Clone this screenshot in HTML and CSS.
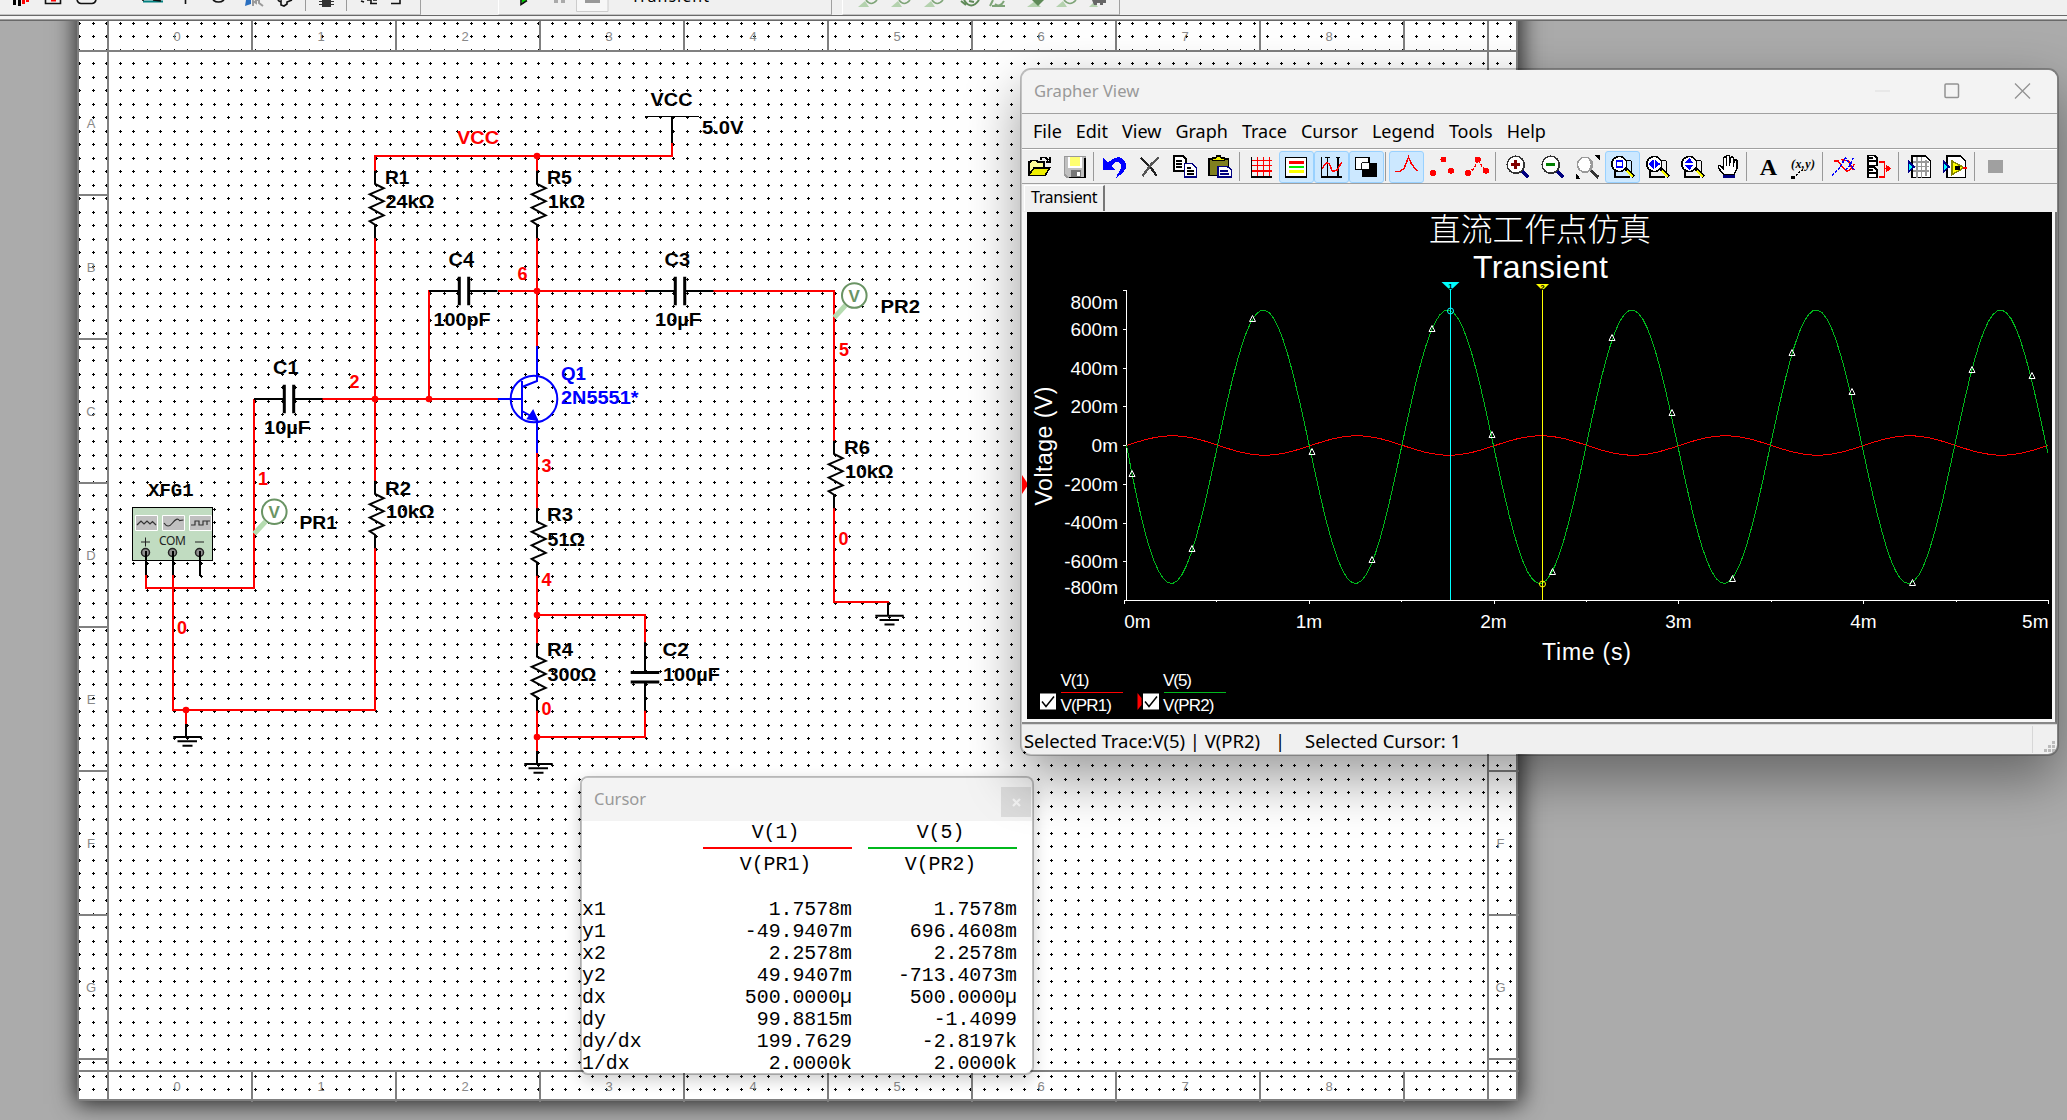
FILE: index.html
```html
<!DOCTYPE html>
<html lang="en">
<head>
<meta charset="utf-8">
<title>Circuit design</title>
<link rel="stylesheet" href="styles.css">
</head>
<body>
<header class="bands">
  <div class="band band-edit">
    <svg width="420" height="15" viewBox="0 0 420 15">
      <path d="M13 0h3v5h-3zM18 0h3v6h-3z" fill="#000"/><path d="M22 0h3v4h-3zM26 0h3v2h-3z" fill="#f00"/>
      <path d="M45.500 0V3.500H60.500V0" class="k"/><path d="M51 0h5v1.500h-5z" fill="#f00"/>
      <path d="M77 0Q78 3.500 81 3.500H92Q95 3.500 96 0" class="k"/>
      <path d="M143 1.500H163" stroke="#008080" stroke-width="2"/><path d="M143 0V1M153 0l8 1" class="k"/>
      <path d="M185.500 0V4" class="k"/><path d="M213 0q5.500 4 11 0" class="k"/>
      <path d="M245 6l1-6h5v4z" fill="#2a6fc0"/><path d="M253 6V1l3 2V0h3v3l4 3" stroke="#9a9a9a" stroke-width="2" fill="none"/>
      <path d="M278 0q1 2 3 1v4l3 1 3-2V2l5-2" class="k"/>
      <path d="M305.500 0V11M346.500 0V11" stroke="#999"/>
      <path d="M322 0h9v7h-9z" fill="#333"/><path d="M319 1.500h15M319 4.500h15" stroke="#333"/>
      <path d="M361 1l3 1M367 0h4v4M370 3.500h7M373 0h4" class="k"/><path d="M391 3.500h9V0" class="k"/>
    </svg>
  </div>
  <div class="band band-run">
    <svg width="333" height="15" viewBox="498 0 333 15">
      <path d="M520 0h6l-4 4z" fill="#00d000"/><path d="M520 0V4.500l6-4" class="k"/>
      <path d="M553 0h4v3h-4zM560 0h4v3h-4z" fill="#aaa"/>
      <path d="M575.500 0V11.500H607V0" fill="#f7f7f7" stroke="#ccc"/><path d="M584 0h15v3h-15z" fill="#999"/>
      <text x="630" y="2" class="analysis" textLength="78">Transient</text>
    </svg>
  </div>
  <div class="band band-probe">
    <svg width="277" height="15" viewBox="842 0 277 15">
      <g id="probes" fill="none">
        <path d="M857 7l7-6 4 6z" fill="#b4d2ae"/><path d="M865 0q5 7 11 0" stroke="#7ea477" stroke-width="1.600"/>
        <path d="M890 7l7-6 4 6z" fill="#b4d2ae"/><path d="M898 0q5 7 11 0" stroke="#7ea477" stroke-width="1.600"/>
        <path d="M923 7l7-6 4 6z" fill="#b4d2ae"/><path d="M931 0q5 7 11 0" stroke="#7ea477" stroke-width="1.600"/>
        <path d="M960 1l5 4M963 0q7 11 15 0M968 1l5 1" stroke="#5f8a58" stroke-width="2"/>
        <path d="M989 6l3-6M994 4q5 4 9-3M991 6h13" stroke="#7ea477" stroke-width="2"/>
        <path d="M1026 7l8-6 6 6z" fill="#b4d2ae"/><path d="M1031 0h12l-6 6z" fill="#5f8a58"/>
        <path d="M1055 7l7-6 4 6z" fill="#b4d2ae"/><path d="M1063 0q6 7 12 0" stroke="#7ea477" stroke-width="1.600"/>
        <path d="M1088 7l5-5 4 5z" fill="#b4d2ae"/><path d="M1091 0h14v3h-3v2h-3V3h-3v2h-3z" fill="#666"/>
      </g>
    </svg>
  </div>
</header>

<main class="workspace">
  <div class="sheet"></div>
  <svg class="schematic" width="2067" height="1099" viewBox="0 21 2067 1099">
    <defs>
      <pattern id="dots" patternUnits="userSpaceOnUse" x="79" y="8" width="27" height="27">
        <path d="M0 1h1v1h-1zM13 1h3v1h-3zM14 0h1v3h-1zM26 1h1v1h-1zM0 0h1v3h-1zM1 1h1v1h-1zM0 15h2v1h-2zM26 15h1v1h-1zM0 14h1v3h-1zM13 15h3v1h-3zM14 14h1v3h-1z"/>
      </pattern>
      <path id="res" d="M0 0V13.300L8.700 17.600L-5.300 23.600L8.700 30.600L-5.300 37L8.700 44.600L-5.300 50.600L0 54V67.500"/>
      <g id="cap"><path d="M0 0H30.300M39.700 0H68.500"/><path d="M30.300 -14.300V14.300M39.700 -14.300V14.300" stroke-width="3"/></g>
      <g id="gnd"><path d="M0 -13V0M-12.700 0H15.700M-8.500 4.300H11M-3.500 8.700H6.500"/></g>
      <g id="probe"><path d="M-20 22L-9 10" stroke="#b5dcb0" stroke-width="5"/><circle r="12.300" fill="#fff" stroke="#6a9464" stroke-width="2"/><text x="-5.700" y="6" class="probe-v">V</text></g>
    </defs>
    <rect x="79" y="21" width="1437" height="1078" fill="url(#dots)" shape-rendering="crispEdges"/>
    <g class="frame">
      <path d="M79 51H1516M79 1071H1519M108 21V1101M1488 21V1101"/>
      <path d="M252 21V51M396 21V51M540 21V51M684 21V51M828 21V51M972 21V51M1116 21V51M1260 21V51M1404 21V51"/>
      <path d="M252 1071V1102M396 1071V1102M540 1071V1102M684 1071V1102M828 1071V1102M972 1071V1102M1116 1071V1102M1260 1071V1102M1404 1071V1102"/>
      <path d="M79 195H108M79 339H108M79 483H108M79 627H108M79 771H108M79 915H108M79 1059H108"/>
      <path d="M1488 771H1519M1488 915H1519M1488 1059H1519"/>
    </g>
    <g class="zones">
      <text x="177" y="41">0</text><text x="321" y="41">1</text><text x="465" y="41">2</text><text x="609" y="41">3</text><text x="753" y="41">4</text><text x="897" y="41">5</text><text x="1041" y="41">6</text><text x="1185" y="41">7</text><text x="1329" y="41">8</text>
      <text x="177" y="1091">0</text><text x="321" y="1091">1</text><text x="465" y="1091">2</text><text x="609" y="1091">3</text><text x="753" y="1091">4</text><text x="897" y="1091">5</text><text x="1041" y="1091">6</text><text x="1185" y="1091">7</text><text x="1329" y="1091">8</text>
      <text x="91" y="128">A</text><text x="91" y="272">B</text><text x="91" y="416">C</text><text x="91" y="560">D</text><text x="91" y="704">E</text><text x="91" y="848">F</text><text x="91" y="992">G</text>
      <text x="1500.500" y="848">F</text><text x="1500.500" y="992">G</text>
    </g>
    <g class="wire">
      <path d="M375 171V156H672V143M537 156V171M375 237V481M375 548V710H173V575M321 399H498M429 399V290M498 291H645M537 237V346M713 291H834V441M834 508V602H889M254 399V588H146V575M537 453V509M537 575V644M537 615H645V644M537 710V751M537 737H645V710M186 710V724"/>
    </g>
    <g class="part">
      <path d="M672 143V116"/><path d="M645 116.500H699" stroke-width="1.200"/>
      <use href="#res" x="375" y="170.700"/><use href="#res" x="537" y="170.700"/><use href="#res" x="375" y="480.700"/><use href="#res" x="537" y="508.300"/><use href="#res" x="537" y="643.300"/><use href="#res" x="834" y="440.700"/>
      <use href="#cap" x="254" y="399"/><use href="#cap" x="429" y="291"/><use href="#cap" x="645" y="291"/>
      <g transform="translate(645 642.300) rotate(90)"><use href="#cap"/></g>
      <use href="#gnd" x="186" y="737"/><use href="#gnd" x="537" y="764"/><use href="#gnd" x="888" y="615.700"/>
    </g>
    <g class="node"><circle cx="537" cy="156" r="3.300"/><circle cx="537" cy="291" r="3.300"/><circle cx="375" cy="399" r="3.300"/><circle cx="429" cy="399" r="3.300"/><circle cx="537" cy="615" r="3.300"/><circle cx="537" cy="737" r="3.300"/><circle cx="186" cy="710" r="3.300"/></g>
    <g class="bjt">
      <circle cx="534" cy="399" r="23.300"/><path d="M498 399H522M522 381V419.500M537 346V381L522 387M522 411L537 419.500V453"/><path d="M528 418.500L537 420L533 411z" fill="#00f"/>
    </g>
    <g class="gen">
      <rect x="132.500" y="507.500" width="80" height="53" fill="#c1dcc1" stroke="#000"/>
      <g fill="#c0c0c0" stroke="#fff"><path d="M135.500 515.500h22v15h-22zM162.500 515.500h22v15h-22zM189.500 515.500h22v15h-22z"/></g>
      <path d="M137 525l4-4 3 3 3-3 3 3 2.500-2.500 3.500 3.500M164 523q4 6 8.500 0t7-2.500l4-.5M191 525h4v-4h4v4h4v-4h4v4M207 521h3" fill="none" stroke="#333" stroke-width="1.200"/>
      <path d="M141 542h9M145.500 537.500v9M195 542h9" stroke="#222"/>
      <text x="159" y="545" class="com" textLength="27">COM</text>
      <g fill="#909090" stroke="#222" stroke-width="1.500"><circle cx="145.500" cy="552.500" r="4"/><circle cx="172.500" cy="552.500" r="4"/><circle cx="199.500" cy="552.500" r="4"/></g>
      <path d="M146 551V575M173 551V575M200 551V576" stroke="#000" stroke-width="2"/>
    </g>
    <use href="#probe" x="274.300" y="511.700"/><use href="#probe" x="854.300" y="295.500"/>
    <g class="label">
      <text x="650.500" y="105.500" textLength="42" lengthAdjust="spacingAndGlyphs">VCC</text>
      <text x="702" y="134" textLength="41.500" lengthAdjust="spacingAndGlyphs">5.0V</text>
      <text x="385" y="183.500" textLength="24.500" lengthAdjust="spacingAndGlyphs">R1</text><text x="385.500" y="208" textLength="49" lengthAdjust="spacingAndGlyphs">24kΩ</text>
      <text x="547" y="183.500" textLength="25" lengthAdjust="spacingAndGlyphs">R5</text><text x="548" y="208" textLength="37" lengthAdjust="spacingAndGlyphs">1kΩ</text>
      <text x="448.500" y="266" textLength="25.500" lengthAdjust="spacingAndGlyphs">C4</text><text x="433.500" y="326" textLength="57" lengthAdjust="spacingAndGlyphs">100pF</text>
      <text x="664.500" y="266" textLength="25.500" lengthAdjust="spacingAndGlyphs">C3</text><text x="655" y="326" textLength="46" lengthAdjust="spacingAndGlyphs">10µF</text>
      <text x="273" y="374" textLength="25.500" lengthAdjust="spacingAndGlyphs">C1</text><text x="264" y="434" textLength="46" lengthAdjust="spacingAndGlyphs">10µF</text>
      <text x="385" y="494.500" textLength="26" lengthAdjust="spacingAndGlyphs">R2</text><text x="386" y="518" textLength="48.500" lengthAdjust="spacingAndGlyphs">10kΩ</text>
      <text x="547" y="521" textLength="26" lengthAdjust="spacingAndGlyphs">R3</text><text x="547.500" y="545.500" textLength="37.500" lengthAdjust="spacingAndGlyphs">51Ω</text>
      <text x="547" y="656" textLength="26" lengthAdjust="spacingAndGlyphs">R4</text><text x="547.500" y="680.500" textLength="49" lengthAdjust="spacingAndGlyphs">300Ω</text>
      <text x="662.500" y="656" textLength="26" lengthAdjust="spacingAndGlyphs">C2</text><text x="663" y="680.500" textLength="57" lengthAdjust="spacingAndGlyphs">100µF</text>
      <text x="844" y="454" textLength="26" lengthAdjust="spacingAndGlyphs">R6</text><text x="845" y="478" textLength="48.500" lengthAdjust="spacingAndGlyphs">10kΩ</text>
      <text x="299.500" y="528.500" class="big" textLength="37.500" lengthAdjust="spacingAndGlyphs">PR1</text>
      <text x="880.500" y="312.500" class="big" textLength="39.500" lengthAdjust="spacingAndGlyphs">PR2</text>
      <text x="148" y="496" class="mono">XFG1</text>
      <g fill="#00f"><text x="561" y="379.500" textLength="25" lengthAdjust="spacingAndGlyphs">Q1</text><text x="561" y="404" textLength="77.500" lengthAdjust="spacingAndGlyphs">2N5551*</text></g>
      <g fill="#f00"><text x="457" y="144" textLength="42" lengthAdjust="spacingAndGlyphs">VCC</text>
        <text x="517.500" y="279.500">6</text><text x="349.500" y="388">2</text><text x="258" y="485">1</text><text x="177" y="633.500">0</text><text x="541.500" y="471.500">3</text><text x="541.500" y="585.500">4</text><text x="541.500" y="714.500">0</text><text x="839" y="356">5</text><text x="838.500" y="545">0</text></g>
    </g>
  </svg>

  <section class="window cursor-window">
    <div class="cursor-title"><span>Cursor</span><b class="cursor-close"><svg width="9" height="9" viewBox="0 0 9 9"><path d="M1 1l7 7M8 1l-7 7" stroke="#f4f4f4" stroke-width="2.200"/></svg></b></div>
    <div class="readout">
      <span></span><span class="head red">V(1)</span><span class="head green">V(5)</span>
      <span></span><span class="sub">V(PR1)</span><span class="sub">V(PR2)</span>
      <span>x1</span><span>1.7578m</span><span>1.7578m</span>
      <span>y1</span><span>-49.9407m</span><span>696.4608m</span>
      <span>x2</span><span>2.2578m</span><span>2.2578m</span>
      <span>y2</span><span>49.9407m</span><span>-713.4073m</span>
      <span>dx</span><span>500.0000µ</span><span>500.0000µ</span>
      <span>dy</span><span>99.8815m</span><span>-1.4099</span>
      <span>dy/dx</span><span>199.7629</span><span>-2.8197k</span>
      <span>1/dx</span><span>2.0000k</span><span>2.0000k</span>
    </div>
  </section>

  <section class="window grapher">
    <div class="titlebar"><span>Grapher View</span>
      <svg width="156" height="16" viewBox="0 0 156 16" fill="none"><path d="M0 8H15" stroke="#ddd"/><rect x="70" y="1" width="13.500" height="13.500" rx="1" stroke="#929292" stroke-width="1.500"/><path d="M140 .5l15 15M155 .5l-15 15" stroke="#929292" stroke-width="1.300"/></svg>
    </div>
    <nav class="menu"><span>File</span><span>Edit</span><span>View</span><span>Graph</span><span>Trace</span><span>Cursor</span><span>Legend</span><span>Tools</span><span>Help</span></nav>
    <div class="tools">
      <i><svg viewBox="0 0 16 16"><path d="M.5 13.500V4.500h1l1-1h3l1 1h4v4" fill="#ff9" stroke="#000"/><path d="M.5 13.500L4 8.500h10.500l-3 5z" fill="#ee0" stroke="#000"/><path d="M8.500 3V1.500h3l2 2M14.500 1v3.500H12" fill="none" stroke="#000"/></svg></i>
      <i><svg viewBox="0 0 16 16"><path d="M1 1h14v14H3l-2-2z" fill="#c0c0c0" stroke="#999"/><path d="M4 1h8v7H4z" fill="#ffff70"/><path d="M4 1v7h8V1" fill="none" stroke="#fff"/><path d="M5 10h7v5H5z" fill="#777"/><path d="M9 11h2v3H9z" fill="#fff"/><path d="M4 15h10.500V2" fill="none" stroke="#000"/></svg></i>
      <u></u>
      <i><svg viewBox="0 0 16 16"><path d="M0 2v8h8L5.500 7.500Q8 3.500 11 5Q14 8 9 13.500V15q7-4 6.500-9Q13-.5 7 2.500L3 5z" fill="#00f"/></svg></i>
      <i><svg viewBox="0 0 16 16"><path d="M2 2l3 3 4 4 3.500 5" fill="none" stroke="#222" stroke-width="1.600"/><path d="M14 1.500L9 6 3 14" fill="none" stroke="#555" stroke-width="1.500"/></svg></i>
      <i><svg viewBox="0 0 16 16"><path d="M.5.5h6l2 2v8h-8z" fill="#fff" stroke="#000"/><path d="M2 4h4M2 6h4M2 8h4" stroke="#000"/><path d="M7.500 5.500h5l3 3v6h-8z" fill="#fff" stroke="#000080"/><path d="M9 8.500h3M9 10.500h5M9 12.500h5" stroke="#000"/></svg></i>
      <i><svg viewBox="0 0 16 16"><path d="M.5 2.500h13v11H.5z" fill="#808020" stroke="#000"/><path d="M3 3.500V2h2L6 .5h2L9 2h2v1.500z" fill="#ee0" stroke="#000"/><path d="M6.500 7.500h6l3 2v5h-9z" fill="#fff" stroke="#000080"/><path d="M8 10.500h5M8 12.500h6" stroke="#000080"/></svg></i>
      <u></u>
      <i><svg viewBox="0 0 16 16"><path d="M5.500 1v13M9.500 1v13M13.500 1v13M1 3.500h14M1 7h14M1 10.500h14" stroke="#f00"/><path d="M1.500 1v13.500h14" fill="none" stroke="#000"/></svg></i>
      <i class="on"><svg viewBox="0 0 16 16"><path d="M1 1.500h14v13H1z" fill="#fff" stroke="#000"/><path d="M3 5h10" stroke="#f00" stroke-width="1.400"/><path d="M3 8h10" stroke="#0e0"/><path d="M3 11h10" stroke="#ff0" stroke-width="1.400"/></svg></i>
      <i class="on"><svg viewBox="0 0 16 16"><path d="M1.500 1v13.500H15M5.500 1v13M12.500 1v13M4 1.500h3M11 1.500h3" fill="none" stroke="#000"/><path d="M2 9l3-4 2 1 2 5 3-1 3-5" fill="none" stroke="#f00"/></svg></i>
      <i class="on"><svg viewBox="0 0 16 16"><path d="M1 1.500h9v8H1z" fill="#fff" stroke="#000"/><path d="M5 5h10v9.500H5z"/><path d="M5 5h5v4.500H5z" fill="#fff" stroke="#000" stroke-width=".6"/></svg></i>
      <u></u>
      <i class="on"><svg viewBox="0 0 16 16"><path d="M0 11h3l3-2L9 1.500 11 6l4 5" class="r"/></svg></i>
      <i><svg viewBox="0 0 16 16"><g fill="#f00"><circle cx="2" cy="12" r="2"/><circle cx="9" cy="3" r="2"/><circle cx="14" cy="10.500" r="2"/></g></svg></i>
      <i><svg viewBox="0 0 16 16"><path d="M2 12l4-3 3-6 2 4 3 4" class="r" stroke-dasharray="2 1"/><g fill="#f00"><circle cx="2" cy="12" r="2"/><circle cx="8.500" cy="3" r="2"/><circle cx="14" cy="10.500" r="2"/></g></svg></i>
      <u></u>
      <i><svg viewBox="0 0 16 16"><path d="M10.500 10.500l4.500 4.500" stroke="#000080" stroke-width="2.500"/><circle cx="6.500" cy="6.500" r="5.700" fill="#fff" stroke="#333"/><path d="M3.500 6.500h6M6.500 3.500v6" stroke="#800000" stroke-width="2"/></svg></i>
      <i><svg viewBox="0 0 16 16"><path d="M10.500 10.500l4.500 4.500" stroke="#000080" stroke-width="2.500"/><circle cx="6.500" cy="6.500" r="5.700" fill="#fff" stroke="#333"/><path d="M3.500 6.500h6" stroke="#008000" stroke-width="2"/></svg></i>
      <i><svg viewBox="0 0 16 16"><path d="M10 10.500l5 4.500" stroke="#333" stroke-width="2"/><circle cx="6" cy="6.500" r="5" fill="#fff" stroke="#999"/><path d="M9 3q3 3 0 7" fill="none" stroke="#999" stroke-width="1.500"/><path d="M12 0h4v4zM0 12v4h3z"/></svg></i>
      <i class="on"><svg viewBox="0 0 16 16"><path d="M2.500 10v4.500h10M13.500 4v8M9 3.500h4" fill="none" stroke="#000"/><circle cx="5.500" cy="6" r="5" fill="#fff" stroke="#000"/><path d="M3.500 4h4v4h-4z" fill="#fff" stroke="#00f"/><path d="M9.500 9l5.500 5.500" stroke="#000" stroke-width="2.400"/><path d="M10.500 10.500l4 4" stroke="#ff0"/></svg></i>
      <i><svg viewBox="0 0 16 16"><path d="M2.500 10v4.500h10M13.500 4v8M9 3.500h4" fill="none" stroke="#000"/><circle cx="5.500" cy="6" r="5" fill="#fff" stroke="#000"/><path d="M1.500 6L5 3v6zM9.500 6L6 3v6z" fill="#00f"/><path d="M9.500 9l5.500 5.500" stroke="#000" stroke-width="2.400"/><path d="M10.500 10.500l4 4" stroke="#ff0"/></svg></i>
      <i><svg viewBox="0 0 16 16"><path d="M2.500 10v4.500h10M13.500 4v8M9 3.500h4" fill="none" stroke="#000"/><circle cx="5.500" cy="6" r="5" fill="#fff" stroke="#000"/><path d="M5.500 2l3 3.500h-6zM5.500 10l3-3.500h-6z" fill="#00f"/><path d="M9.500 9l5.500 5.500" stroke="#000" stroke-width="2.400"/><path d="M10.500 10.500l4 4" stroke="#ff0"/></svg></i>
      <i><svg viewBox="0 0 16 16"><path d="M5 13L1.500 8.500q0-2 2-1L5 9V2q1-1.500 2 0v5-6q1-1.500 2 0v6l.5-5q1-1.500 2 0V8l.5-4q1-1.500 2 0v5l-2 4z" fill="#fff" stroke="#000"/><path d="M4.500 13.500h8V15.500h-8z" fill="#000080"/></svg></i>
      <u></u>
      <i><b class="letter">A</b></i>
      <i><svg viewBox="0 0 16 16" class="annot"><text x="0" y="8.500" textLength="16">(x,y)</text><path d="M1.500 15L8 9.500" fill="none" stroke="#000" stroke-dasharray="1.500 .8"/><path d="M0 14h2.500v2H0z"/></svg></i>
      <u></u>
      <i><svg viewBox="0 0 16 16"><path d="M1 4h3l3 4 3 3 3-2 2-3M6 3l5 1 3 6" class="r"/><path d="M0 13.500l5-5 4-6.500 2 3 4 5M9 10l3-3 2-5" fill="none" stroke="#00f" stroke-dasharray="2 .7"/></svg></i>
      <i><svg viewBox="0 0 16 16"><path d="M.5 0h4l2 2v5H.5zM.5 8h4l2 2v5H.5zM1 2h3M1 4h5M1 10h3M1 12h5" fill="#fff" stroke="#000" stroke-width="1.300"/><path d="M8 4.500h3.500v10H8M11 9h3" fill="none" stroke="#f00"/><path d="M12.500 6v6l3.500-3z" fill="#f00"/></svg></i>
      <u></u>
      <i><svg viewBox="0 0 16 16"><path d="M2.500.5h9l3.500 3.500v11H2.500z" fill="#fff" stroke="#000" stroke-width="1.200"/><path d="M3 4.500h11M3 7.500h11M3 10.500h11M6 1v14M9 1v14M12 3v11" stroke="#999"/><path d="M0 4v7.500L4 8z" fill="#0ff" stroke="#008"/></svg></i>
      <i><svg viewBox="0 0 16 16"><path d="M2.500.5h9l3.500 3.500v11H2.500z" fill="#fff" stroke="#000" stroke-width="1.200"/><path d="M0 4v7.500L4 8z" fill="#0ff" stroke="#008"/><path d="M6 4v9l8-4.500z" fill="#ff0" stroke="#880"/><path d="M8 7h3v3H8z"/><path d="M13 8.500h3" stroke="#f00"/></svg></i>
      <u></u>
      <i><b class="stop"></b></i>
    </div>
    <div class="tabs"><span>Transient</span></div>
    <div class="plot-frame">
      <svg class="plot" width="1025" height="507" viewBox="1027 212 1025 507">
        <text x="1540" y="241" class="cjk" text-anchor="middle">直流工作点仿真</text>
        <text x="1540.500" y="278" class="plot-title" text-anchor="middle" textLength="135">Transient</text>
        <path class="axis" d="M1126.500 290V600.500M1124 600.500H2049M1123 290.500H1127M1123 329.500H1127M1123 368.500H1127M1123 406.500H1127M1123 445.500H1127M1123 484.500H1127M1123 523.500H1127M1123 561.500H1127M1124.500 600V604M1309.500 600V604M1494.500 600V604M1678.500 600V604M1863.500 600V604M2048.500 600V604M1216.500 600V602M1401.500 600V602M1586.500 600V602M1771.500 600V602M1956.500 600V602"/>
        <g class="ticks" text-anchor="end">
          <text x="1118" y="309">800m</text><text x="1118" y="335.500">600m</text><text x="1118" y="374.500">400m</text><text x="1118" y="413">200m</text><text x="1118" y="452">0m</text><text x="1118" y="490.500">-200m</text><text x="1118" y="529">-400m</text><text x="1118" y="568">-600m</text><text x="1118" y="594">-800m</text><text x="2048.500" y="627.500">5m</text>
        </g>
        <g class="ticks" text-anchor="middle"><text x="1137.500" y="627.500">0m</text><text x="1309" y="627.500">1m</text><text x="1493.500" y="627.500">2m</text><text x="1678.500" y="627.500">3m</text><text x="1863.500" y="627.500">4m</text></g>
        <text x="1586.500" y="660" class="axis-title" text-anchor="middle" textLength="89">Time (s)</text>
        <text transform="translate(1052 505.500) rotate(-90)" class="axis-title" textLength="119">Voltage (V)</text>
        <g class="traces"><polyline id="v1" stroke="#f00"/><polyline id="v5" stroke="#00b81c"/></g>
        <path d="M1450.500 288V600" stroke="#0ff" shape-rendering="crispEdges"/><path d="M1542.500 288V600" stroke="#ff0"/>
        <path d="M1441.500 282H1459.500L1450.500 290.500z" fill="#0ff"/><path d="M1536 284H1549L1542.500 290.500z" fill="#ff0"/>
        <text x="1450.500" y="289" class="flag" text-anchor="middle">1</text><text x="1542.500" y="289.500" class="flag" text-anchor="middle">2</text>
        <circle cx="1450.500" cy="311" r="3" class="hit" stroke="#0ff"/><circle cx="1542.500" cy="584" r="3" class="hit" stroke="#ff0"/>
        <g id="marks"></g>
        <g class="legend">
          <text x="1060.500" y="686" textLength="29">V(1)</text><text x="1060.500" y="711" textLength="51.500">V(PR1)</text><text x="1163" y="686" textLength="29">V(5)</text><text x="1163" y="711" textLength="51.500">V(PR2)</text>
          <path d="M1061 692.500H1123" stroke="#f00"/><path d="M1164 692.500H1226" stroke="#00b81c"/>
          <path d="M1040 693.500h16v16h-16zM1143 693.500h16v16h-16z" fill="#fff"/><path d="M1042 701.500l4 5 8-10M1145 701.500l4 5 8-10" fill="none" stroke="#000" stroke-width="1.500"/>
          <path d="M1137.500 693l4 5v7l-4 5z" fill="#f00"/>
        </g>
      </svg>
      <b class="graph-flag"></b>
    </div>
    <footer class="status"><span>Selected Trace:V(5) | V(PR2)</span><span class="bar">|</span><span>Selected Cursor: 1</span>
      <svg width="26" height="29" viewBox="0 0 26 29"><path d="M1.500 1V28" stroke="#d7d7d7"/><path d="M21 16h3v3h-3zM17 20h3v3h-3zM21 20h3v3h-3zM13 24h3v3h-3zM17 24h3v3h-3zM21 24h3v3h-3z" fill="#bbb"/></svg>
    </footer>
  </section>
</main>
<script src="chart.js"></script>
</body>
</html>
```
FILE: styles.css
```css
* { box-sizing: border-box; }
body { margin: 0; width: 2067px; height: 1120px; overflow: hidden; background: #ababab; font-family: "Noto Sans", sans-serif; color: #000; }

/* docked toolbars */
.bands { display: flex; height: 21px; background: linear-gradient(#f0f0f0 15px, #696969 15px 16px, #f3f3f3 16px 19px, #a0a0a0 19px 20px, #696969 20px); }
.band { height: 15px; overflow: hidden; border-right: 1px solid #a0a0a0; border-bottom: 1px solid #c4c4c4; }
.band svg { display: block; }
.band-edit { width: 421px; }
.band-run { width: 334px; margin-left: 77px; border-left: 1px solid #fff; }
.band-probe { width: 278px; margin-left: 10px; border-left: 1px solid #fff; }
.k { fill: none; stroke: #111; stroke-width: 1.6; }
.analysis { font-size: 16px; }

/* drawing sheet */
.workspace { position: relative; height: 1099px; overflow: hidden; }
.sheet { position: absolute; left: 77px; top: -60px; width: 1441px; height: 1140px; background: #fff; border: 2px solid #808080; box-shadow: 1px 1px 22px 2px rgba(0, 0, 0, .8); }
.schematic { position: absolute; left: 0; top: 0; }
.frame { stroke: #808080; stroke-width: 2; fill: none; shape-rendering: crispEdges; }
.zones { font: 13px "Liberation Sans", sans-serif; fill: #888; text-anchor: middle; }
.wire { stroke: #f00; stroke-width: 2; fill: none; shape-rendering: crispEdges; }
.node { fill: #f00; }
.part { stroke: #000; stroke-width: 2; fill: none; }
.bjt { stroke: #00f; stroke-width: 2; fill: none; }
.label { font: bold 18px "Liberation Sans", sans-serif; }
.label .big { font-size: 19px; }
.label .mono { font: bold 19px "Liberation Mono", monospace; }
.com { font-size: 12px; fill: #222; }
.probe-v { font: bold 17px "Liberation Sans", sans-serif; fill: #6a9464; }

/* floating windows */
.window { position: absolute; background-clip: padding-box; border: 2px solid rgba(0, 0, 0, .24); overflow: hidden; display: flex; flex-direction: column; }
.cursor-window { left: 580px; top: 755px; width: 454px; height: 299px; border-radius: 8px; background-color: #fff; box-shadow: 0 5px 16px rgba(0, 0, 0, .2); }
.cursor-title { height: 43px; flex: none; background: #f3f3f3; display: flex; justify-content: space-between; padding: 9px 1px 4px 12px; color: #999; font-size: 16.5px; line-height: 24px; }
.cursor-close { width: 30px; height: 30px; background: #dcdcdc; display: grid; place-items: center; }
.readout { display: grid; grid-template-columns: 105px 165px 165px; font: 19.850px/22px "Liberation Mono", monospace; text-align: right; padding-top: 1px; grid-template-rows: 27px 50px; }
.readout > :nth-child(3n+1) { text-align: left; }
.head, .sub { margin-left: 16px; text-align: center; padding-right: 4px; }
.head { border-bottom: 2px solid; line-height: 22px; }
.head.red { border-color: #f00; }
.head.green { border-color: #00b81c; }
.readout .head { color: #000; }
.sub { padding-top: 5px; }

.grapher { left: 1020px; top: 47px; width: 1039px; height: 688px; border-radius: 11px; background-color: #f0f0f0; box-shadow: 0 22px 54px rgba(0, 0, 0, .4); }
.titlebar { height: 44px; flex: none; display: flex; justify-content: space-between; align-items: center; padding: 0 26px 2px 12px; background: #f3f3f3; color: #999; font-size: 16.600px; border-bottom: 1px solid #a0a0a0; }
.menu { height: 35px; flex: none; display: flex; gap: 14px; align-items: center; padding-left: 11px; font-size: 18px; border-bottom: 1px solid #a0a0a0; }
.tools { height: 35px; flex: none; display: flex; align-items: center; border-top: 1px solid #fff; border-bottom: 1px solid #a0a0a0; }
.tools i { width: 35px; height: 32px; flex: none; display: grid; place-items: center; font-style: normal; }
.tools .on { background: #cce8ff; border: 1px solid #99d1ff; border-radius: 3px; }
.tools i svg { width: 24px; height: 24px; shape-rendering: crispEdges; }
.tools u { width: 5.800px; height: 29px; flex: none; background: linear-gradient(90deg, transparent 1px, #999 1px 2px, transparent 2px); }
.r { fill: none; stroke: #f00; }
.letter { font: bold 24px/24px "Liberation Serif", serif; }
.annot { font: italic bold 8px "Liberation Serif", serif; }
.stop { width: 15px; height: 13px; background: #a0a0a0; }
.tabs { height: 28px; flex: none; padding: 1px 0 0 2px; }
.tabs span { display: block; width: 81px; height: 26px; padding-left: 6px; border: 1px solid #fff; border-right: 2px solid #777; border-bottom: 0; font-size: 16px; line-height: 23px; letter-spacing: -.4px; }
.plot-frame { flex: none; position: relative; height: 512px; padding: 0 0 0 5px; border-right: 2px solid #777; border-bottom: 2px solid #888; background: #f7f7f7; }
.plot { display: block; background: #000; fill: #fff; font-family: "Liberation Sans", sans-serif; }
.graph-flag { position: absolute; left: 0; top: 263px; width: 5px; height: 19px; background: #f00; clip-path: polygon(0 0, 100% 40%, 100% 60%, 0 100%); }
.cjk { font: 300 31.700px "Noto Sans CJK SC", sans-serif; }
.plot-title { font-size: 32px; }
.axis { stroke: #fff; fill: none; shape-rendering: crispEdges; }
.ticks { font-size: 19px; }
.axis-title { font-size: 23px; }
.traces { fill: none; shape-rendering: crispEdges; }
.mark { fill: none; stroke: #fff; }
.hit { fill: none; }
.flag { font: bold 8px "Liberation Sans", sans-serif; fill: #000; }
.legend { font-size: 17px; }
.status { flex: 1; display: flex; padding-left: 2px; border-top: 1px solid #d7d7d7; font-size: 18.5px; line-height: 31px; letter-spacing: -.05px; }
.status .bar { margin: 0 20px 0 15px; }
.status svg { margin-left: auto; }
```
FILE: chart.js
```js
// Trace geometry: 184.27 px per millisecond, 0.1938 px per millivolt.
const X0 = 1126.5, Y0 = 445.5, MS = 184.27, MV = 0.1938;
function plot(id, value) {
  const pts = [];
  for (let t = 0; t <= 5.0001; t += 0.025) {
    pts.push((X0 + t * MS).toFixed(1) + ',' + (Y0 - value(t) * MV).toFixed(1));
  }
  document.getElementById(id).setAttribute('points', pts.join(' '));
}
plot('v1', t => 50 * Math.sin(2 * Math.PI * t));
// The amplifier output leads by a small phase once the start-up step has passed.
plot('v5', t => -706 * Math.sin(2 * Math.PI * (t + 0.007 * Math.min(1, t * 10))) - 6.5 * Math.min(1, t * 20));

const marks = [[1132, 473.5], [1252.500, 318.5], [1192, 548.5], [1312, 451.5], [1372, 559.5], [1432, 328.5],
  [1492, 434.5], [1552.5, 571.5], [1612, 337.5], [1672, 412.5], [1732.5, 578.5], [1792, 352.5],
  [1852, 391.5], [1912.5, 582.5], [1972, 369.5], [2032, 375.5]];
document.getElementById('marks').innerHTML = marks.map(([x, y]) =>
  `<path class="mark" d="M${x} ${y - 3}l3 6h-6z"/>`).join('');
```
